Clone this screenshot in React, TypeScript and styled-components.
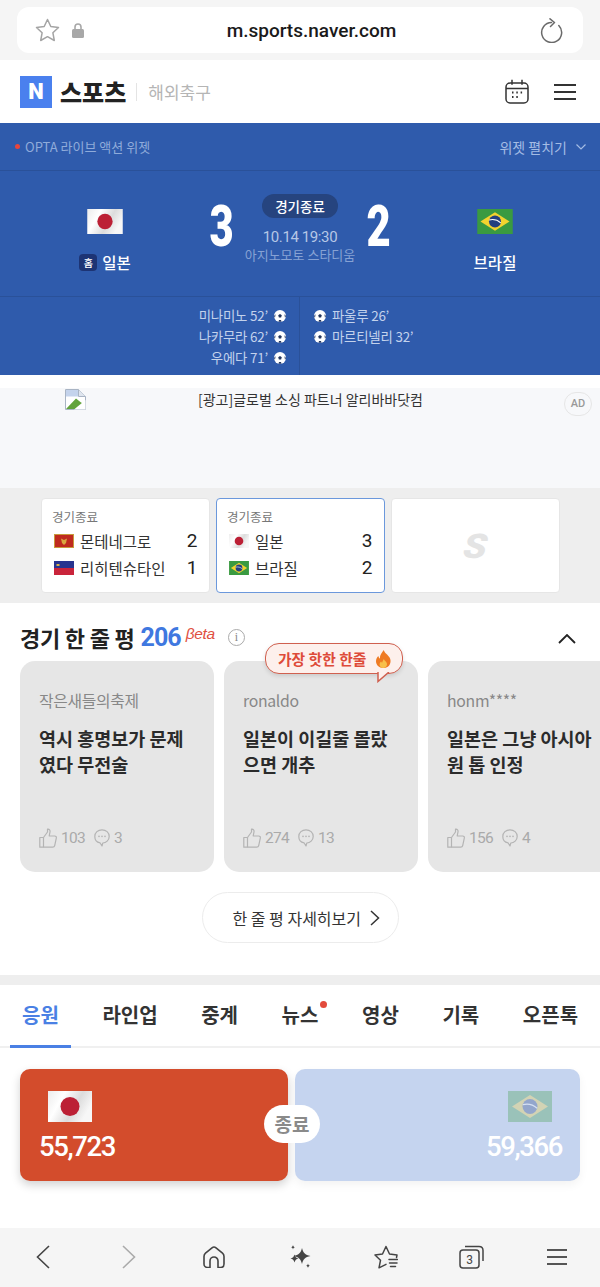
import React from 'react'
import styled, { createGlobalStyle } from 'styled-components'

const SANS = `"Noto Sans CJK KR", "Noto Sans", sans-serif`
const LATIN = `Roboto, "Noto Sans CJK KR", sans-serif`

const matches = [
  {
    id: 'mne',
    home: { flag: 'mne', name: '몬테네그로', score: 2 },
    away: { flag: 'lie', name: '리히텐슈타인', score: 1 },
    active: false,
  },
  {
    id: 'jpn',
    home: { flag: 'jpn', name: '일본', score: 3 },
    away: { flag: 'bra', name: '브라질', score: 2 },
    active: true,
  },
]

const comments = [
  { author: '작은새들의축제', text: '역시 홍명보가 문제였다 무전술', likes: 103, replies: 3 },
  { author: 'ronaldo', text: '일본이 이길줄 몰랐으면 개추', likes: 274, replies: 13, hot: true },
  { author: 'honm****', text: '일본은 그냥 아시아원 톱 인정', likes: 156, replies: 4 },
]

const tabs = ['응원', '라인업', '중계', '뉴스', '영상', '기록', '오픈톡']

const JapanFlag: React.FC<{ width: number; height: number }> = ({ width, height }) => (
  <svg width={width} height={height} viewBox="0 0 44 31">
    <defs>
      <linearGradient id="jpnCloth" x1="0" x2="1" y1="0" y2="0.4">
        <stop offset="0" stopColor="#ececec" />
        <stop offset="0.35" stopColor="#fff" />
        <stop offset="0.7" stopColor="#dcdcdc" />
        <stop offset="1" stopColor="#f7f7f7" />
      </linearGradient>
    </defs>
    <rect width="44" height="31" fill="url(#jpnCloth)" />
    <circle cx="22" cy="15.5" r="9.5" fill="#bc2035" />
  </svg>
)

const BrazilFlag: React.FC<{ width: number; height: number }> = ({ width, height }) => (
  <svg width={width} height={height} viewBox="0 0 44 31">
    <rect width="44" height="31" fill="#3a9a41" />
    <path d="M22 4 40 15.5 22 27 4 15.5Z" fill="#f3d32f" />
    <circle cx="22" cy="15.5" r="7.5" fill="#24407f" />
    <path d="M14.8 13.6c5-1.2 10.6.2 14.3 3.6" fill="none" stroke="#fff" strokeWidth="1.3" />
  </svg>
)

const MontenegroFlag = () => (
  <svg width="20" height="14" viewBox="0 0 20 14">
    <rect width="20" height="14" fill="#c89a3c" />
    <rect x="1" y="1" width="18" height="12" fill="#bf2a1f" />
    <path d="M7 4.5 10 6l3-1.500-1 4.500L10 11 8 9Z" fill="#d9a83f" />
  </svg>
)

const LiechtensteinFlag = () => (
  <svg width="20" height="14" viewBox="0 0 20 14">
    <rect width="20" height="7" fill="#27348f" />
    <rect y="7" width="20" height="7" fill="#c9243b" />
    <rect x="2.500" y="3" width="3" height="2" fill="#d6b14a" />
  </svg>
)

const SmallFlag: React.FC<{ code: string }> = ({ code }) => {
  if (code === 'mne') return <MontenegroFlag />
  if (code === 'lie') return <LiechtensteinFlag />
  if (code === 'jpn') return <JapanFlag width={20} height={14} />
  return <BrazilFlag width={20} height={14} />
}

const Ball = () => (
  <BallMark width="12" height="12" viewBox="0 0 12 12">
    <circle cx="6" cy="6" r="6" fill="#fff" />
    <path d="M6 4 7.800 5.300 7.100 7.400H4.900L4.200 5.300Z" fill="#24365f" />
    <path d="M12 6 10.400 4.200 11 7.800ZM0 6 1.600 4.200 1 7.800ZM4.500 11.800 5 10H7L7.500 11.800Z" fill="#24365f" />
  </BallMark>
)

const ThumbIcon = () => (
  <svg width="18" height="20" viewBox="0 0 18 20" fill="none" stroke="#b4b4b4" strokeWidth="1.200" strokeLinejoin="round">
    <path d="M.8 9.500h3.700v9.700H.8z" />
    <path d="M4.500 9.500 8.500 4V1.200c1.900-.3 2.800 1 2.500 2.600l-.8 4.200h5.500c1.300 0 1.900 1 1.600 2.200l-1.600 7.400c-.2 1-1 1.600-2 1.600H4.500" />
  </svg>
)

const BubbleIcon = () => (
  <svg width="16" height="18" viewBox="0 0 16 18" fill="none">
    <path d="M8 .8c4 0 7.200 2.800 7.200 6.600S12 14 8.800 14L8 17l-2-3.200C3 13.200.8 10.800.8 7.400.8 3.600 4 .8 8 .8Z" stroke="#b4b4b4" strokeWidth="1.200" strokeLinejoin="round" />
    <circle cx="5" cy="7.400" r=".8" fill="#b4b4b4" />
    <circle cx="8" cy="7.400" r=".8" fill="#b4b4b4" />
    <circle cx="11" cy="7.400" r=".8" fill="#b4b4b4" />
  </svg>
)

const FireIcon = () => (
  <svg width="17" height="18" viewBox="0 0 17 18">
    <path d="M8.800 0c.6 3 4 4.500 5.800 7.500 1.800 3.200 1 7.300-1.800 9.200-1.300.9-2.900 1.300-4.500 1.300-4.300 0-7.300-3-7.300-6.700 0-2.300 1-4 2.400-5.300.2 1.300.7 2.100 1.500 2.600C4.700 5 6.800 2.500 8.800 0Z" fill="#ef7a22" />
    <path d="M8.800 9c.4 1.700 3.200 2.700 3.200 5.200 0 2.200-1.700 3.800-3.700 3.800-2 0-3.700-1.500-3.700-3.500 0-1.300.7-2.300 1.500-3 .2.700.5 1 1 1.200C7.300 11.500 8 10.300 8.800 9Z" fill="#f8c04a" />
  </svg>
)

const BrokenImage = () => (
  <svg width="21" height="21" viewBox="0 0 21 21">
    <path d="M.5.5h13l7 7v13H.5Z" fill="#fff" stroke="#a9b4c4" />
    <path d="M13.500.5v7h7" fill="#dfe5ee" stroke="#a9b4c4" />
    <path d="M1 1h12v6.500H1Z" fill="#c4d3ec" />
    <path d="M1 20 11 9.500l5 4 4 2V20Z" fill="#62a33c" />
    <path d="M20.500 11 9 20.500h11.500Z" fill="#fff" />
  </svg>
)

export default function App() {
  return (
    <Page>
      <GlobalStyle />
      <BrowserBar>
        <UrlPill>
          <UrlLeft>
            <svg width="25" height="24" viewBox="0 0 25 24" fill="none" stroke="#a4a4a4" strokeWidth="1.500" strokeLinejoin="round">
              <path d="m12.500 1.500 3.300 7 7.700 1-5.600 5.300 1.400 7.700-6.800-3.800-6.800 3.800 1.400-7.700L1.500 9.500l7.700-1Z" />
            </svg>
            <svg width="12" height="15" viewBox="0 0 12 15">
              <path d="M3 6V4a3 3 0 0 1 6 0v2" fill="none" stroke="#a8a8a8" strokeWidth="1.600" />
              <rect y="6" width="12" height="9" rx="1.500" fill="#a8a8a8" />
            </svg>
          </UrlLeft>
          <UrlText>m.sports.naver.com</UrlText>
          <svg width="23" height="25" viewBox="0 0 23 25" fill="none" stroke="#6a6a6a" strokeWidth="1.500" strokeLinecap="round" strokeLinejoin="round">
            <path d="M11.500 4.500A10 10 0 1 0 18.800 7.500" />
            <path d="M10 .8 14.500 4.500 10.500 8.500" />
          </svg>
        </UrlPill>
      </BrowserBar>

      <SiteHeader>
        <LogoN>N</LogoN>
        <LogoWord>스포츠</LogoWord>
        <LogoRule />
        <LogoSection>해외축구</LogoSection>
        <HeaderIcons>
          <svg width="24" height="25" viewBox="0 0 24 25" fill="none" stroke="#333" strokeWidth="1.500">
            <rect x="1" y="4" width="22" height="20" rx="4" />
            <path d="M1 9.500h22M7 .8v5M17 .8v5" />
            <path d="M7 13.500h1.500M11.300 13.500h1.500M15.600 13.500h1.500M7 18h1.500M11.300 18h1.500" strokeWidth="2" />
          </svg>
          <MenuIcon $width={22} $gap={7} $color="#333" />
        </HeaderIcons>
      </SiteHeader>

      <Widget>
        <WidgetBar>
          <WidgetTitle>OPTA 라이브 액션 위젯</WidgetTitle>
          <WidgetToggle>
            위젯 펼치기
            <svg width="10" height="6" viewBox="0 0 10 6" fill="none" stroke="#a4bce4" strokeWidth="1.200">
              <path d="m.5.500 4.500 4.500L9.500.5" />
            </svg>
          </WidgetToggle>
        </WidgetBar>

        <ScoreBoard>
          <Team>
            <TeamFlag><JapanFlag width={36} height={25} /></TeamFlag>
            <TeamName><HomeBadge>홈</HomeBadge>일본</TeamName>
          </Team>
          <ScoreDigit>3</ScoreDigit>
          <MatchInfo>
            <StatusPill>경기종료</StatusPill>
            <MatchDate>10.14 19:30</MatchDate>
            <Stadium>아지노모토 스타디움</Stadium>
          </MatchInfo>
          <ScoreDigit>2</ScoreDigit>
          <Team>
            <TeamFlag><BrazilFlag width={36} height={25} /></TeamFlag>
            <TeamName>브라질</TeamName>
          </Team>
        </ScoreBoard>

        <Goals>
          <GoalColumn $side="home">
            <GoalRow>미나미노 52’<Ball /></GoalRow>
            <GoalRow>나카무라 62’<Ball /></GoalRow>
            <GoalRow>우에다 71’<Ball /></GoalRow>
          </GoalColumn>
          <GoalColumn $side="away">
            <GoalRow><Ball />파울루 26’</GoalRow>
            <GoalRow><Ball />마르티넬리 32’</GoalRow>
          </GoalColumn>
        </Goals>
      </Widget>

      <AdGap />
      <AdBanner>
        <BrokenImage />
        <AdText>[광고]글로벌 소싱 파트너 알리바바닷컴</AdText>
        <AdBadge>AD</AdBadge>
      </AdBanner>

      <MatchStrip>
        {matches.map((m) => (
          <MatchCard key={m.id} $active={m.active}>
            <MatchStatus>경기종료</MatchStatus>
            {[m.home, m.away].map((t) => (
              <MatchRow key={t.name}>
                <SmallFlag code={t.flag} />
                <MatchTeam>{t.name}</MatchTeam>
                <MatchScore>{t.score}</MatchScore>
              </MatchRow>
            ))}
          </MatchCard>
        ))}
        <PlaceholderCard>
          <PlaceholderLogo>S</PlaceholderLogo>
        </PlaceholderCard>
      </MatchStrip>

      <CommentSection>
        <CommentHead>
          <CommentTitle>경기 한 줄 평</CommentTitle>
          <CommentCount>206</CommentCount>
          <BetaMark>βeta</BetaMark>
          <InfoMark>i</InfoMark>
          <CollapseIcon width="18" height="10" viewBox="0 0 18 10" fill="none" stroke="#222" strokeWidth="1.800">
            <path d="m1 9 8-8 8 8" />
          </CollapseIcon>
        </CommentHead>
        <CommentRow>
          {comments.map((c) => (
            <CommentCard key={c.author}>
              {c.hot && (
                <HotTag>
                  가장 핫한 한줄 <FireIcon />
                  <HotTail width="13" height="11" viewBox="0 0 13 11">
                    <path d="M1 0V9.500L12 0" fill="#fdf0ec" stroke="#d0604f" strokeWidth="1.500" />
                  </HotTail>
                </HotTag>
              )}
              <CommentAuthor>{c.author}</CommentAuthor>
              <CommentText>{c.text}</CommentText>
              <CommentStats>
                <ThumbIcon />
                <StatNumber>{c.likes}</StatNumber>
                <BubbleIcon />
                <StatNumber>{c.replies}</StatNumber>
              </CommentStats>
            </CommentCard>
          ))}
        </CommentRow>
        <MoreWrap>
          <MoreButton>
            한 줄 평 자세히보기
            <svg width="10" height="16" viewBox="0 0 10 16" fill="none" stroke="#333" strokeWidth="1.500">
              <path d="m1 1 7.500 7L1 15" />
            </svg>
          </MoreButton>
        </MoreWrap>
      </CommentSection>

      <SectionDivider />

      <TabBar>
        {tabs.map((t, i) => (
          <Tab key={t} $active={i === 0} $dot={t === '뉴스'}>{t}</Tab>
        ))}
      </TabBar>

      <CheerSection>
        <CheerCard $team="home">
          <JapanFlag width={44} height={31} />
          <CheerCount>55,723</CheerCount>
        </CheerCard>
        <CheerCard $team="away">
          <FadedFlag><BrazilFlag width={44} height={31} /></FadedFlag>
          <CheerCount>59,366</CheerCount>
        </CheerCard>
        <CheerBadge>종료</CheerBadge>
      </CheerSection>

      <BottomBar>
        <svg width="14" height="24" viewBox="0 0 14 24" fill="none" stroke="#444" strokeWidth="1.600">
          <path d="M13 1 1.500 12 13 23" />
        </svg>
        <svg width="14" height="24" viewBox="0 0 14 24" fill="none" stroke="#aaa" strokeWidth="1.600">
          <path d="m1 1 11.500 11L1 23" />
        </svg>
        <svg width="22" height="22" viewBox="0 0 22 22" fill="none" stroke="#444" strokeWidth="1.600" strokeLinejoin="round">
          <path d="M1 10.500C1 9 1.500 8 2.500 7.200L9 1.800c1.200-1 2.800-1 4 0l6.500 5.400C20.500 8 21 9 21 10.500V18c0 2-1.500 3.500-3.500 3.500H15v-6.500c0-2.200-1.800-4-4-4s-4 1.800-4 4v6.500H4.500C2.500 21.500 1 20 1 18Z" />
        </svg>
        <svg width="22" height="23" viewBox="0 0 22 23" fill="#444">
          <path d="M13 3c1 4.500 3 7 8.500 8-5.500 1-7.500 3.500-8.500 8-1-4.500-3-7-8.500-8C10 10 12 7.500 13 3Z" />
          <path d="M5.500 9.500c.6 2.300 1.700 3.400 4 4-2.300.6-3.400 1.700-4 4-.6-2.300-1.700-3.400-4-4 2.300-.6 3.400-1.700 4-4Z" />
          <path d="M4 0c.3 1.400.8 1.900 2 2.200-1.200.3-1.700.8-2 2.200-.3-1.400-.8-1.900-2-2.200 1.200-.3 1.700-.8 2-2.200ZM19 18.500c.3 1.400.8 1.900 2 2.200-1.200.3-1.700.8-2 2.200-.3-1.400-.8-1.900-2-2.200 1.200-.3 1.700-.8 2-2.200Z" />
        </svg>
        <svg width="24" height="24" viewBox="0 0 24 24" fill="none" stroke="#444" strokeWidth="1.500" strokeLinejoin="round" strokeLinecap="round">
          <path d="M22.500 12.500 23 10l-7.500-1L12 1.500 8.500 9 1 10l5.500 5.300L5 22.800l7-3.500" />
          <path d="M15 14.500h8.500M15.500 18h7.500M16.500 21.500h5" />
        </svg>
        <svg width="25" height="24" viewBox="0 0 25 24" fill="none" stroke="#444" strokeWidth="1.500">
          <rect x="1" y="5" width="19" height="18" rx="3" />
          <path d="M6 1.500h14c2.500 0 4 1.500 4 4V16" />
          <text x="10.500" y="18.500" fontSize="12" textAnchor="middle" fill="#444" stroke="none" fontFamily="Roboto, sans-serif">3</text>
        </svg>
        <MenuIcon $width={20} $gap={7} $color="#555" />
      </BottomBar>
    </Page>
  )
}

const GlobalStyle = createGlobalStyle`
  html, body {
    margin: 0;
    padding: 0;
    background: #fff;
  }
`
const Page = styled.div`
  width: 600px;
  height: 1287px;
  overflow: hidden;
  font-family: ${SANS};
  color: #222;
`
const BrowserBar = styled.div`
  height: 60px;
  box-sizing: border-box;
  padding: 7px 17px;
  background: #f5f5f5;
`
const UrlPill = styled.div`
  height: 46px;
  box-sizing: border-box;
  padding: 0 20px 0 18px;
  border-radius: 12px;
  background: #fff;
  display: flex;
  align-items: center;
  justify-content: space-between;
`
const UrlLeft = styled.div`
  display: flex;
  align-items: center;
  gap: 12px;
`
const UrlText = styled.div`
  margin-left: -1px;
  font: 500 19px ${LATIN};
  color: #1a1a1a;
`
const SiteHeader = styled.header`
  height: 63px;
  box-sizing: border-box;
  padding: 0 24px 0 20px;
  display: flex;
  align-items: center;
`
const LogoN = styled.div`
  width: 32px;
  height: 32px;
  background: #4a80ee;
  color: #fff;
  font: 900 22px/32px ${LATIN};
  text-align: center;
`
const LogoWord = styled.div`
  margin-left: 8px;
  font-size: 24px;
  font-weight: 900;
  line-height: 32px;
  color: #222;
`
const LogoRule = styled.div`
  width: 1px;
  height: 18px;
  margin: 0 11px 0 10px;
  background: #e4e4e4;
`
const LogoSection = styled.div`
  font-size: 17px;
  color: #b5b5b5;
`
const HeaderIcons = styled.div`
  margin-left: auto;
  display: flex;
  align-items: center;
  gap: 25px;
`
const MenuIcon = styled.div<{ $width: number; $gap: number; $color: string }>`
  width: ${(p) => p.$width}px;
  height: ${(p) => p.$gap * 2 + 2}px;
  background: linear-gradient(${(p) => p.$color}, ${(p) => p.$color}) 0 0 / 100% 2px no-repeat,
    linear-gradient(${(p) => p.$color}, ${(p) => p.$color}) 0 50% / 100% 2px no-repeat,
    linear-gradient(${(p) => p.$color}, ${(p) => p.$color}) 0 100% / 100% 2px no-repeat;
`
const Widget = styled.section`
  background: #2f5bac;
`
const WidgetBar = styled.div`
  height: 48px;
  box-sizing: border-box;
  padding: 0 14px 0 15px;
  border-bottom: 1px solid #2a5199;
  display: flex;
  align-items: center;
  justify-content: space-between;
`
const WidgetTitle = styled.div`
  position: relative;
  padding-left: 10px;
  font-size: 13px;
  color: #8fabda;

  &::before {
    content: '';
    position: absolute;
    left: 0;
    top: 50%;
    width: 5px;
    height: 5px;
    margin-top: -2.500px;
    border-radius: 50%;
    background: #e8453c;
  }
`
const WidgetToggle = styled.div`
  display: flex;
  align-items: center;
  gap: 9px;
  font-size: 14px;
  color: #a4bce4;
`
const ScoreBoard = styled.div`
  height: 126px;
  box-sizing: border-box;
  padding-top: 23px;
  border-bottom: 1px solid #2a5199;
  display: grid;
  grid-template-columns: 210px 23px 1fr 23px 210px;
  align-items: start;
`
const Team = styled.div`
  display: flex;
  flex-direction: column;
  align-items: center;
`
const TeamFlag = styled.div`
  height: 25px;
  margin-top: 15px;
`
const TeamName = styled.div`
  margin-top: 17px;
  display: flex;
  align-items: center;
  gap: 5px;
  font-size: 15.500px;
  font-weight: 500;
  line-height: 22px;
  color: #fff;
`
const HomeBadge = styled.span`
  width: 18px;
  height: 17px;
  border-radius: 4px;
  background: #1d3474;
  font-size: 10px;
  line-height: 17px;
  text-align: center;
`
const ScoreDigit = styled.div`
  margin-top: 1px;
  display: flex;
  justify-content: center;
  font: 900 58px/62px ${LATIN};
  color: #fff;
  transform: scaleX(0.72);
`
const MatchInfo = styled.div`
  display: flex;
  flex-direction: column;
  align-items: center;
`
const StatusPill = styled.div`
  width: 76px;
  height: 24px;
  border-radius: 12px;
  background: #26447f;
  color: #fff;
  font-size: 13.500px;
  font-weight: 500;
  line-height: 24px;
  text-align: center;
`
const MatchDate = styled.div`
  margin-top: 9px;
  font: 400 15px/20px ${LATIN};
  letter-spacing: -0.400px;
  color: #b6c7e6;
`
const Stadium = styled.div`
  margin-top: -1px;
  font-size: 13px;
  line-height: 18px;
  color: #86a2d4;
`
const Goals = styled.div`
  height: 78px;
  display: grid;
  grid-template-columns: 300px 1fr;
`
const GoalColumn = styled.div<{ $side: 'home' | 'away' }>`
  box-sizing: border-box;
  padding-top: 7px;
  display: flex;
  flex-direction: column;
  align-items: ${(p) => (p.$side === 'home' ? 'flex-end' : 'flex-start')};
  ${(p) =>
    p.$side === 'home'
      ? 'padding-right: 13px; border-right: 1px solid #2a5199;'
      : 'padding-left: 14px;'}
`
const GoalRow = styled.div`
  height: 21px;
  display: flex;
  align-items: center;
  gap: 6px;
  font-size: 13.400px;
  letter-spacing: -0.200px;
  color: #c3d2ec;
`
const BallMark = styled.svg`
  margin-top: 3px;
`
const AdGap = styled.div`
  height: 13px;
  background: #fff;
`
const AdBanner = styled.div`
  height: 100px;
  box-sizing: border-box;
  padding: 1px 8px 0 65px;
  background: #f7f8fa;
  display: flex;
  align-items: flex-start;
`
const AdText = styled.div`
  margin-left: 112px;
  font-size: 14px;
  line-height: 20px;
  color: #333;
`
const AdBadge = styled.div`
  margin-left: auto;
  margin-top: 3px;
  width: 28px;
  height: 24px;
  box-sizing: border-box;
  border: 1px solid #e6e6e6;
  border-radius: 12px;
  font: 500 11px/22px ${LATIN};
  text-align: center;
  color: #999;
`
const MatchStrip = styled.div`
  height: 115px;
  box-sizing: border-box;
  padding: 10px 0 0 41px;
  background: #eeeeee;
  display: flex;
  gap: 6px;
`
const MatchCard = styled.div<{ $active?: boolean }>`
  width: 169px;
  height: 95px;
  box-sizing: border-box;
  padding: 10px 0 0 10px;
  border: 1px solid ${(p) => (p.$active ? '#6b98dc' : '#e6e6e6')};
  border-radius: 4px;
  background: #fff;
`
const MatchStatus = styled.div`
  margin-bottom: 2px;
  font-size: 12.500px;
  line-height: 16px;
  color: #777;
`
const MatchRow = styled.div`
  height: 27px;
  padding-left: 2px;
  display: flex;
  align-items: center;
`
const MatchTeam = styled.div`
  margin-left: 6px;
  font-size: 15.500px;
  color: #333;
`
const MatchScore = styled.div`
  margin-left: auto;
  width: 20px;
  margin-right: 7px;
  font: 400 19px ${LATIN};
  text-align: center;
  color: #222;
`
const PlaceholderCard = styled(MatchCard)`
  padding: 0;
  display: flex;
  align-items: center;
  justify-content: center;
`
const PlaceholderLogo = styled.div`
  font: 900 34px ${LATIN};
  color: #e4e4e4;
  transform: scaleX(1.1) skewX(-14deg);
`
const CommentSection = styled.section`
  height: 372px;
  box-sizing: border-box;
  padding-top: 20px;
  overflow: hidden;
`
const CommentHead = styled.div`
  height: 28px;
  padding: 0 24px 0 20px;
  display: flex;
  align-items: center;
`
const CommentTitle = styled.h2`
  margin: 0;
  font-size: 22px;
  font-weight: 700;
  letter-spacing: -0.200px;
  color: #222;
`
const CommentCount = styled.div`
  margin-left: 6px;
  font: 700 25px ${LATIN};
  letter-spacing: -1px;
  color: #3f78e0;
`
const BetaMark = styled.div`
  margin: -7px 0 0 5px;
  font: italic 400 15.500px "Liberation Sans", sans-serif;
  letter-spacing: -0.300px;
  color: #e0503f;
`
const InfoMark = styled.div`
  width: 17px;
  height: 17px;
  margin-left: 13px;
  box-sizing: border-box;
  border: 1px solid #aaa;
  border-radius: 50%;
  font: 400 12px/15px "Liberation Serif", serif;
  text-align: center;
  color: #888;
`
const CollapseIcon = styled.svg`
  margin-left: auto;
  margin-top: 4px;
`
const CommentRow = styled.div`
  margin-top: 10px;
  padding-left: 20px;
  display: flex;
  gap: 10px;
`
const CommentCard = styled.article`
  position: relative;
  flex: 0 0 194px;
  height: 211px;
  box-sizing: border-box;
  padding: 28px 19px 0;
  border-radius: 15px;
  background: #e6e6e6;
  display: flex;
  flex-direction: column;
`
const HotTag = styled.div`
  position: absolute;
  top: -18px;
  left: 41px;
  width: 138px;
  height: 31px;
  box-sizing: border-box;
  padding-left: 12px;
  border: 1.500px solid #d0604f;
  border-radius: 14px;
  background: #fdf0ec;
  display: flex;
  align-items: center;
  gap: 5px;
  font-size: 14.800px;
  font-weight: 700;
  color: #de4b39;
  white-space: pre;
  box-shadow: 0 2px 4px rgba(0, 0, 0, 0.12);
`
const HotTail = styled.svg`
  position: absolute;
  right: 12px;
  bottom: -10px;
`
const CommentAuthor = styled.div`
  font-size: 15.800px;
  line-height: 24px;
  letter-spacing: -0.300px;
  color: #888;
`
const CommentText = styled.p`
  margin: 12px 0 0;
  height: 52px;
  font-size: 18.500px;
  font-weight: 700;
  line-height: 26px;
  word-break: break-all;
  color: #2b2b2b;
`
const CommentStats = styled.div`
  margin-top: auto;
  margin-bottom: 24px;
  display: flex;
  align-items: center;
  font-size: 15.500px;
  color: #aaa;
`
const StatNumber = styled.span`
  margin: 0 9px 0 4px;
  font-family: ${LATIN};
  letter-spacing: -0.700px;
`
const MoreWrap = styled.div`
  margin-top: 20px;
  display: flex;
  justify-content: center;
`
const MoreButton = styled.div`
  width: 197px;
  height: 51px;
  box-sizing: border-box;
  padding-left: 30px;
  border: 1px solid #ececec;
  border-radius: 26px;
  display: flex;
  align-items: center;
  gap: 9px;
  font-size: 16px;
  color: #333;
`
const SectionDivider = styled.div`
  height: 10px;
  background: #eeeeee;
`
const TabBar = styled.nav`
  height: 63px;
  box-sizing: border-box;
  padding-left: 10px;
  border-bottom: 2px solid #f0f0f0;
  display: flex;
  gap: 19.600px;
`
const Tab = styled.div<{ $active?: boolean; $dot?: boolean }>`
  position: relative;
  height: 63px;
  box-sizing: border-box;
  padding: 13px 12px 0;
  border-bottom: 3px solid ${(p) => (p.$active ? '#4a80e4' : 'transparent')};
  font-size: 20px;
  font-weight: 700;
  line-height: 34px;
  white-space: nowrap;
  color: ${(p) => (p.$active ? '#4a80e4' : '#333')};

  ${(p) =>
    p.$dot &&
    `&::after {
      content: '';
      position: absolute;
      top: 16px;
      right: 3px;
      width: 7px;
      height: 7px;
      border-radius: 50%;
      background: #e34b3c;
    }`}
`
const CheerSection = styled.section`
  position: relative;
  height: 180px;
  box-sizing: border-box;
  padding: 21px 20px 0;
  display: grid;
  grid-template-columns: 268px 285px;
  justify-content: space-between;
  align-items: start;
`
const CheerCard = styled.div<{ $team: 'home' | 'away' }>`
  height: 112px;
  box-sizing: border-box;
  padding: 22px 18px 0 ${(p) => (p.$team === 'home' ? '28px' : '18px')};
  border-radius: 10px;
  background: ${(p) => (p.$team === 'home' ? '#d34c2c' : '#c5d4ef')};
  box-shadow: 0 4px 10px rgba(0, 0, 0, ${(p) => (p.$team === 'home' ? '0.18' : '0.05')});
  display: flex;
  flex-direction: column;
  align-items: ${(p) => (p.$team === 'home' ? 'flex-start' : 'flex-end')};
`
const FadedFlag = styled.div`
  height: 31px;
  margin-right: 10px;
  opacity: 0.3;
`
const CheerCount = styled.div`
  margin: 6px 0 0 -9px;
  font: 500 27.500px/38px ${LATIN};
  letter-spacing: -1.400px;
  color: #fff;
`
const CheerBadge = styled.div`
  position: absolute;
  top: 57px;
  left: 264px;
  width: 56px;
  height: 38px;
  border-radius: 19px;
  background: #fff;
  font-size: 19px;
  font-weight: 700;
  line-height: 38px;
  text-align: center;
  color: #8a8a8a;
`
const BottomBar = styled.nav`
  height: 59px;
  box-sizing: border-box;
  padding-bottom: 2px;
  background: #f5f5f5;
  display: grid;
  grid-template-columns: repeat(7, 1fr);
  justify-items: center;
  align-items: center;
`
